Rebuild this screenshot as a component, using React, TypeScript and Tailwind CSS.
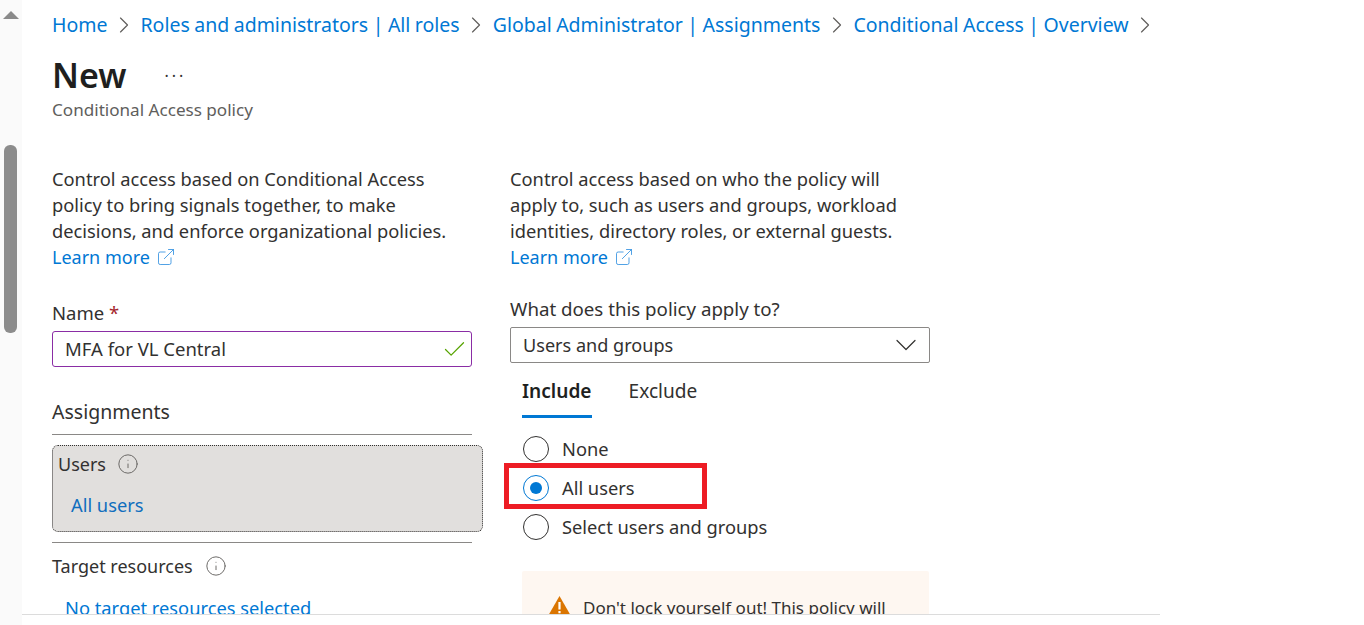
import { Check, ChevronDown, ChevronRight, ExternalLink, Info } from "lucide-react"

const crumbs = [
  "Home",
  "Roles and administrators | All roles",
  "Global Administrator | Assignments",
  "Conditional Access | Overview",
]

const LearnMore = () => (
  <a className="flex items-center gap-[6px] text-[18px] text-[#0078d4]">
    Learn more
    <ExternalLink className="h-[20px] w-[20px] text-[#2f8fe0]" strokeWidth={1} />
  </a>
)

const Radio = ({ label, checked }: { label: string; checked?: boolean }) => (
  <div className="relative flex h-[39px] items-center gap-[13px]">
    {checked ? (
      <span className="flex h-[26px] w-[26px] items-center justify-center rounded-full border border-[#0078d4]">
        <span className="h-[12px] w-[12px] rounded-full bg-[#0078d4]" />
      </span>
    ) : (
      <span className="h-[26px] w-[26px] rounded-full border border-[#323130]" />
    )}
    <span>{label}</span>
    {checked && (
      <div className="absolute left-[-19px] top-[-5px] h-[46px] w-[203px] border-[5px] border-[#ed1c24]" />
    )}
  </div>
)

export default function App() {
  return (
    <div className="flex h-[625px] w-[1364px] overflow-hidden bg-white font-['Noto_Sans',sans-serif] text-[18.3px] leading-[26px] text-[#323130]">
      <div className="flex w-[22px] shrink-0 flex-col items-start bg-[#fafafa] pl-[3px]">
        <svg className="mt-[11px] h-[8px] w-[16px]" viewBox="0 0 16 8">
          <path d="M8 0 L16 8 H0 Z" fill="#8a8a8a" />
        </svg>
        <div className="ml-[1px] mt-[126px] h-[188px] w-[13px] rounded-[6px] bg-[#8c8c8c]" />
      </div>

      <div className="h-[615px] w-[1138px] shrink-0 overflow-hidden border-b border-[#dcdcdc] pl-[30px]">
        <nav className="flex h-[49px] items-center text-[19.5px] text-[#0078d4] [word-spacing:-0.6px]">
          {crumbs.map((c) => (
            <div key={c} className="flex items-center">
              <a className="whitespace-nowrap">{c}</a>
              <ChevronRight className="mx-[2.5px] h-[28px] w-[28px] text-[#605e5c]" strokeWidth={1} />
            </div>
          ))}
        </nav>

        <div className="flex h-[51px] items-center">
          <h1 className="text-[34px] font-semibold text-[#201f1e]">New</h1>
          <span className="mb-[8px] ml-[38px] text-[16px] tracking-[3px]">...</span>
        </div>
        <p className="h-[24px] text-[17.1px] leading-[20px] text-[#605e5c]">Conditional Access policy</p>

        <div className="mt-[42px] flex gap-[38px]">
          <section className="w-[420px] shrink-0">
            <p>Control access based on Conditional Access policy to bring signals together, to make decisions, and enforce organizational policies.</p>
            <LearnMore />

            <label className="mt-[30px] block text-[18.5px]">
              Name <span className="text-[#a4262c]">*</span>
            </label>
            <div className="mt-[5px] flex h-[36px] items-center justify-between rounded-[3px] border border-[#8a2da5] pl-[12px] pr-[3px]">
              <span className="text-[18.5px]">MFA for VL Central</span>
              <Check className="h-[27px] w-[27px] text-[#57a300]" strokeWidth={1.1} />
            </div>

            <h2 className="mt-[32px] text-[19.5px]">Assignments</h2>
            <div className="mt-[9px] border-t border-[#8a8886]" />
            <div className="mt-[10px] h-[87px] w-[431px] rounded-[6px] border border-dotted border-[#323130] bg-[#e1dfdd] pl-[5px] pt-[5px]">
              <div className="flex items-center gap-[11px] text-[18px]">
                Users
                <Info className="h-[22px] w-[22px] text-[#605e5c]" strokeWidth={1} />
              </div>
              <a className="ml-[13px] mt-[15px] block text-[#106ebe]">All users</a>
            </div>
            <div className="mt-[10px] border-t border-[#8a8886]" />
            <div className="mt-[10px] flex items-center gap-[12px] text-[18px]">
              Target resources
              <Info className="h-[22px] w-[22px] text-[#605e5c]" strokeWidth={1} />
            </div>
            <a className="ml-[13px] mt-[16px] block text-[18.3px] text-[#0078d4]">No target resources selected</a>
          </section>

          <section className="w-[420px] shrink-0">
            <p>Control access based on who the policy will apply to, such as users and groups, workload identities, directory roles, or external guests.</p>
            <LearnMore />

            <label className="mt-[26px] block text-[18.7px]">What does this policy apply to?</label>
            <div className="mt-[5px] flex h-[36px] items-center justify-between rounded-[2px] border border-[#8a8886] pl-[12px] pr-[5px]">
              <span className="text-[18.1px]">Users and groups</span>
              <ChevronDown className="h-[36px] w-[36px] text-[#323130]" strokeWidth={0.8} />
            </div>

            <div className="ml-[12px] mt-[15px] flex gap-[37px] text-[19.1px]">
              <div className="h-[40px] border-b-[3px] border-[#0078d4] font-semibold text-[#201f1e]">Include</div>
              <div>Exclude</div>
            </div>

            <div className="ml-[13px] mt-[11px]">
              <Radio label="None" />
              <Radio label="All users" checked />
              <Radio label="Select users and groups" />
            </div>

            <div className="ml-[12px] mt-[25px] flex h-[80px] w-[407px] gap-[12px] rounded-[2px] bg-[#fef7f1] pl-[26px] pt-[24px]">
              <svg className="mt-[1px] h-[20px] w-[23px] shrink-0" viewBox="0 0 23 20">
                <path d="M11.5 0 L23 20 H0 Z" fill="#db7500" />
                <path d="M10.4 6 H12.6 V13.5 H10.4 Z M10.4 15 H12.6 V17.2 H10.4 Z" fill="#fff" />
              </svg>
              <p className="whitespace-nowrap text-[17px]">Don't lock yourself out! This policy will</p>
            </div>
          </section>
        </div>
      </div>
    </div>
  )
}
